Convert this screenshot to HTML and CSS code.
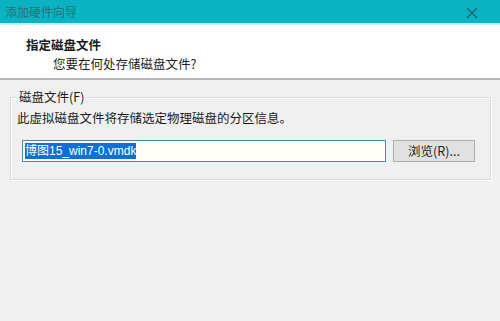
FILE: index.html
```html
<!doctype html>
<html>
<head>
    <meta charset="utf-8">
    <title>添加硬件向导</title>
    <link rel="stylesheet" href="styles.css">
</head>
<body>
    <div class="wizard">
        <div class="titlebar">
            <span class="title">添加硬件向导</span>
            <svg class="close" width="12" height="12" viewBox="0 0 12 12">
                <path d="M1 1 L11 11 M11 1 L1 11" stroke="#24616a" stroke-width="1.3" fill="none"/>
            </svg>
        </div>
        <div class="header">
            <p class="head-title">指定磁盘文件</p>
            <p class="head-sub">您要在何处存储磁盘文件?</p>
        </div>
        <div class="body">
            <fieldset class="group">
                <legend>磁盘文件(F)</legend>
                <p class="desc">此虚拟磁盘文件将存储选定物理磁盘的分区信息。</p>
                <div class="row">
                    <div class="field"><span class="sel">博图15_win7-0.vmdk</span></div>
                    <div class="btn">浏览(R)...</div>
                </div>
            </fieldset>
        </div>
    </div>
</body>
</html>
```

FILE: styles.css
```css
html, body {
    margin: 0;
    padding: 0;
}
body {
    width: 500px;
    height: 321px;
    overflow: hidden;
    background: #f0f0f0;
    font-family: "Noto Sans CJK SC", "Liberation Sans", sans-serif;
    font-size: 12.5px;
    color: #1a1a1a;
}

.titlebar {
    height: 23px;
    background: #0bb3c2;
    border-bottom: 2px solid #c9f1f5;
    display: flex;
    align-items: center;
    justify-content: space-between;
    padding: 0 22px 0 5px;
}
.title {
    color: #2c6e76;
    font-size: 12px;
}
.close {
    margin-top: 2px;
}

.header {
    background: #fff;
    height: 53px;
    border-bottom: 2px solid #b8b8b8;
    padding: 0;
}
.header p {
    margin: 0;
    line-height: 16px;
}
.head-title {
    font-weight: bold;
    padding: 12px 0 0 26px;
}
.head-sub {
    padding: 3px 0 0 53px;
    color: #222;
}

.body {
    padding: 10px 9px 0 10px;
}
.group {
    margin: 0;
    padding: 6px 12px 10px 6px;
    border: 1px solid #dcdcdc;
    box-shadow: inset 1px 1px 0 #fff, 1px 1px 0 #fff;
    height: 72px;
}
.group legend {
    padding: 0 1px;
    margin-left: 1px;
    line-height: 14px;
    color: #1a1a1a;
}
.desc {
    margin: 0;
    line-height: 16px;
}
.row {
    display: flex;
    align-items: center;
    margin-top: 14px;
    margin-left: 5px;
}
.field {
    width: 360px;
    height: 20px;
    border: 1px solid #4a8aa8;
    background: #fffdf6;
    display: flex;
    align-items: center;
    padding-left: 2px;
}
.sel {
    background: #0f6fd3;
    color: #fff;
    font-size: 12px;
    line-height: 16px;
    font-family: "Liberation Sans", "Noto Sans CJK SC", sans-serif;
}
.btn {
    margin-left: 7px;
    width: 80px;
    height: 20px;
    border: 1px solid #adadad;
    background: #e1e1e1;
    text-align: center;
    line-height: 20px;
    color: #222;
}
```
